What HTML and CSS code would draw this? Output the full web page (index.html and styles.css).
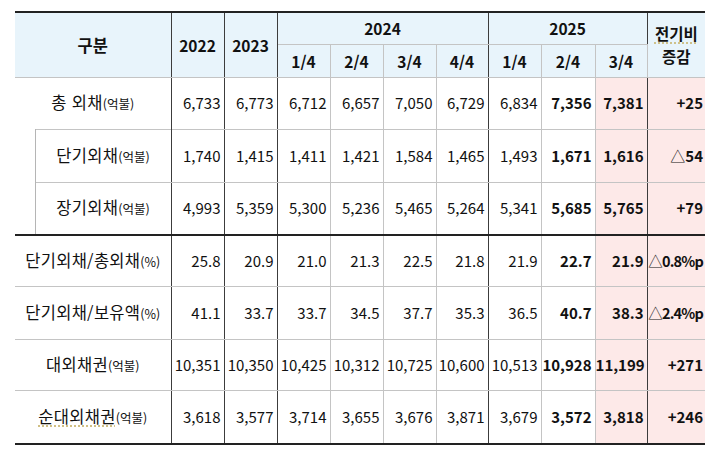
FILE: index.html
```html
<!DOCTYPE html>
<html lang="ko">
<head>
<meta charset="utf-8">
<title>외채 현황</title>
<link rel="stylesheet" href="styles.css">
</head>
<body>
<div class="wrap">
<table class="debt">
  <colgroup>
    <col class="c-ind"><col class="c-lbl">
    <col class="c53"><col class="c53">
    <col class="c53"><col class="c53"><col class="c53"><col class="c52">
    <col class="c53"><col class="c54"><col class="c52">
    <col class="c-chg">
  </colgroup>
  <thead>
    <tr class="h1">
      <th colspan="2" rowspan="2" class="dk first">구분</th>
      <th rowspan="2" class="dk">2022</th>
      <th rowspan="2" class="dk">2023</th>
      <th colspan="4" class="dk">2024</th>
      <th colspan="3" class="dk">2025</th>
      <th rowspan="2" class="last chg-h"><span class="sq">전기비</span><br>증감</th>
    </tr>
    <tr class="h2">
      <th>1/4</th><th>2/4</th><th>3/4</th><th class="dk">4/4</th>
      <th>1/4</th><th>2/4</th><th class="dk">3/4</th>
    </tr>
  </thead>
  <tbody>
    <tr class="r53">
      <td colspan="2" class="lbl first nobot dk">총 외채<small>(억불)</small></td>
      <td class="n dk">6,733</td><td class="n dk">6,773</td>
      <td class="n">6,712</td><td class="n">6,657</td><td class="n">7,050</td><td class="n dk">6,729</td>
      <td class="n">6,834</td><td class="n b">7,356</td><td class="n b pk dk">7,381</td>
      <td class="n b pk last chg">+25</td>
    </tr>
    <tr class="r53">
      <td rowspan="2" class="ind first"></td>
      <td class="lbl sub dk">단기외채<small>(억불)</small></td>
      <td class="n dk">1,740</td><td class="n dk">1,415</td>
      <td class="n">1,411</td><td class="n">1,421</td><td class="n">1,584</td><td class="n dk">1,465</td>
      <td class="n">1,493</td><td class="n b">1,671</td><td class="n b pk dk">1,616</td>
      <td class="n b pk last chg"><span class="tri">△</span>54</td>
    </tr>
    <tr class="r53">
      <td class="lbl sub dk">장기외채<small>(억불)</small></td>
      <td class="n dk">4,993</td><td class="n dk">5,359</td>
      <td class="n">5,300</td><td class="n">5,236</td><td class="n">5,465</td><td class="n dk">5,264</td>
      <td class="n">5,341</td><td class="n b">5,685</td><td class="n b pk dk">5,765</td>
      <td class="n b pk last chg">+79</td>
    </tr>
    <tr class="r52 thick">
      <td colspan="2" class="lbl first dk">단기외채/총외채<small>(%)</small></td>
      <td class="n dk">25.8</td><td class="n dk">20.9</td>
      <td class="n">21.0</td><td class="n">21.3</td><td class="n">22.5</td><td class="n dk">21.8</td>
      <td class="n">21.9</td><td class="n b">22.7</td><td class="n b pk dk">21.9</td>
      <td class="n b pk last chg tight"><span class="tri">△</span>0.8%p</td>
    </tr>
    <tr class="r53">
      <td colspan="2" class="lbl first dk">단기외채/보유액<small>(%)</small></td>
      <td class="n dk">41.1</td><td class="n dk">33.7</td>
      <td class="n">33.7</td><td class="n">34.5</td><td class="n">37.7</td><td class="n dk">35.3</td>
      <td class="n">36.5</td><td class="n b">40.7</td><td class="n b pk dk">38.3</td>
      <td class="n b pk last chg tight"><span class="tri">△</span>2.4%p</td>
    </tr>
    <tr class="r52">
      <td colspan="2" class="lbl first dk">대외채권<small>(억불)</small></td>
      <td class="n dk">10,351</td><td class="n dk">10,350</td>
      <td class="n">10,425</td><td class="n">10,312</td><td class="n">10,725</td><td class="n dk">10,600</td>
      <td class="n">10,513</td><td class="n b">10,928</td><td class="n b pk dk">11,199</td>
      <td class="n b pk last chg">+271</td>
    </tr>
    <tr class="r53 lastrow">
      <td colspan="2" class="lbl first dk"><span class="sq">순대외채권</span><small>(억불)</small></td>
      <td class="n dk">3,618</td><td class="n dk">3,577</td>
      <td class="n">3,714</td><td class="n">3,655</td><td class="n">3,676</td><td class="n dk">3,871</td>
      <td class="n">3,679</td><td class="n b">3,572</td><td class="n b pk dk">3,818</td>
      <td class="n b pk last chg">+246</td>
    </tr>
  </tbody>
</table>
</div>
</body>
</html>
```

FILE: styles.css
```css
html, body {
  margin: 0;
  padding: 0;
  background: #ffffff;
}

.wrap {
  padding: 11px 15px 0 15px;
}

.debt {
  width: 690px;
  table-layout: fixed;
  border-collapse: collapse;
  font-family: "Noto Sans CJK KR", "Noto Sans", sans-serif;
  color: #111111;
  border-top: 2px solid #222222;
  border-bottom: 2px solid #222222;
}

.c-ind { width: 20px; }
.c-lbl { width: 136px; }
.c52 { width: 52px; }
.c53 { width: 53px; }
.c54 { width: 54px; }
.c-chg { width: 58px; }

.debt th,
.debt td {
  border: 1px solid #c4c4c4;
  padding: 0;
  white-space: nowrap;
  overflow: visible;
  line-height: 20px;
}

.debt th {
  background: #e8f4fb;
  font-weight: 700;
  font-size: 15.5px;
  text-align: center;
  vertical-align: middle;
}

.debt thead th.first {
  font-size: 16.5px;
}

.h1 { height: 32px; }
.h2 { height: 33px; }
.r53 { height: 52.6px; }
.r52 { height: 51.8px; }

.debt .dk {
  border-right: 1px solid #3c3c3c;
}

.debt .first {
  border-left: none;
}

.debt .last {
  border-right: none;
}

.chg-h {
  line-height: 23px !important;
}

.sq {
  text-decoration: underline dotted #c7b26a;
  text-underline-offset: 3px;
}

.lbl {
  text-align: center;
  font-size: 16.5px;
  letter-spacing: 0.3px;
  vertical-align: middle;
}

.lbl small {
  font-size: 12.5px;
  letter-spacing: 0;
}

.nobot {
  border-bottom: none !important;
}

.debt .ind {
  border-top: none;
  border-bottom: none;
  border-right: 1px solid #b5b5b5;
}

.n {
  text-align: right;
  font-size: 15px;
  padding-right: 3px !important;
  vertical-align: middle;
}

.b {
  font-weight: 700;
}

.pk {
  background: #fde9e8;
}

.chg {
  padding-right: 2px !important;
}

.tight {
  letter-spacing: -0.8px;
  font-size: 14.5px;
}

.tri {
  font-weight: 400;
}

.thick td {
  border-top: 2px solid #222222;
}
```
